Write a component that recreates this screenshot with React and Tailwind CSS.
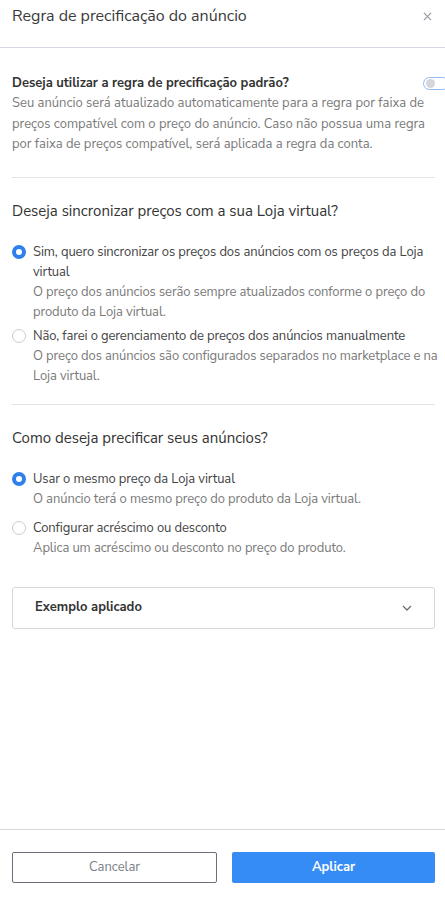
import React, { useState } from "react"

const Radio = ({ checked }) => (
  <span
    className={`mt-[3px] h-[14px] w-[14px] shrink-0 rounded-full bg-white ${
      checked ? "border-[4px] border-[#2f80ed]" : "border border-[#c9ccd3]"
    }`}
  />
)

const Option = ({ checked, label, desc, onClick }) => (
  <div className="flex cursor-pointer gap-[7px]" onClick={onClick}>
    <Radio checked={checked} />
    <div className="text-[13px] leading-[20px] tracking-[-0.1px]">
      <p className="text-[#444]">{label}</p>
      <p className="text-[#7a7a7a]">{desc}</p>
    </div>
  </div>
)

export default function App() {
  const [sync, setSync] = useState("sim")
  const [price, setPrice] = useState("mesmo")

  return (
    <div
      className="flex h-[897px] w-[445px] flex-col overflow-hidden bg-white"
      style={{ fontFamily: "'Nunito Sans', Lato, 'Open Sans', sans-serif" }}
    >
      {/* Header */}
      <div className="flex h-[48px] shrink-0 items-start justify-between border-b border-[#d6d7e6] pl-[12px] pr-[13px] pt-[5px]">
        <h1 className="text-[16px] leading-[22px] text-[#3a3a3a]">Regra de precificação do anúncio</h1>
        <button className="mt-[7px] text-[#9a9ca8]">
          <svg width="9" height="9" viewBox="0 0 10 10" fill="none" stroke="currentColor" strokeWidth="1.4">
            <path d="M1 1l8 8M9 1l-8 8" />
          </svg>
        </button>
      </div>

      <main className="flex-1 pl-[12px] pr-[10px]">
        {/* Default rule */}
        <div className="border-b border-[#e3e3e3] pb-[22px] pt-[25px]">
          <div className="flex items-center justify-between">
            <h2 className="text-[13px] font-bold leading-[20px] text-[#333]">Deseja utilizar a regra de precificação padrão?</h2>
            <span className="-mr-[14px] flex h-[13px] w-[26px] items-center rounded-full border border-[#8fbaf3] bg-white px-[2px]">
              <span className="h-[9px] w-[9px] rounded-full bg-[#d4d6dc]" />
            </span>
          </div>
          <p className="mt-0 text-[13px] leading-[20.5px] text-[#7a7a7a]">
            Seu anúncio será atualizado automaticamente para a regra por faixa de preços compatível com o preço do anúncio. Caso não possua uma regra por faixa de preços compatível, será aplicada a regra da conta.
          </p>
        </div>

        {/* Sync */}
        <div className="border-b border-[#e3e3e3] pb-[18px] pt-[22px]">
          <h2 className="text-[15px] leading-[22px] text-[#333]">Deseja sincronizar preços com a sua Loja virtual?</h2>
          <div className="-mr-[8px] mt-[20px] flex flex-col gap-[4px]">
            <Option
              checked={sync === "sim"}
              onClick={() => setSync("sim")}
              label="Sim, quero sincronizar os preços dos anúncios com os preços da Loja virtual"
              desc="O preço dos anúncios serão sempre atualizados conforme o preço do produto da Loja virtual."
            />
            <Option
              checked={sync === "nao"}
              onClick={() => setSync("nao")}
              label="Não, farei o gerenciamento de preços dos anúncios manualmente"
              desc="O preço dos anúncios são configurados separados no marketplace e na Loja virtual."
            />
          </div>
        </div>

        {/* Pricing */}
        <div className="pt-[22px]">
          <h2 className="text-[15px] leading-[22px] text-[#333]">Como deseja precificar seus anúncios?</h2>
          <div className="mt-[20px] flex flex-col gap-[9px]">
            <Option
              checked={price === "mesmo"}
              onClick={() => setPrice("mesmo")}
              label="Usar o mesmo preço da Loja virtual"
              desc="O anúncio terá o mesmo preço do produto da Loja virtual."
            />
            <Option
              checked={price === "config"}
              onClick={() => setPrice("config")}
              label="Configurar acréscimo ou desconto"
              desc="Aplica um acréscimo ou desconto no preço do produto."
            />
          </div>

          <button className="mt-[29px] flex h-[42px] w-full items-center justify-between rounded-[3px] border border-[#d5d7dc] px-[22px]">
            <span className="text-[13px] font-bold text-[#333]">Exemplo aplicado</span>
            <svg width="10" height="6" viewBox="0 0 10 6" fill="none" stroke="#6b6e78" strokeWidth="1.3">
              <path d="M1 1l4 4 4-4" />
            </svg>
          </button>
        </div>
      </main>

      {/* Footer */}
      <div className="flex h-[68px] shrink-0 items-start gap-[15px] border-t border-[#d9d9d9] pl-[12px] pr-[10px] pt-[22px]">
        <button className="h-[31px] flex-1 rounded-[2px] border border-[#6b6e7c] text-[13px] text-[#7b7e88]">Cancelar</button>
        <button className="h-[31px] flex-1 rounded-[2px] bg-[#358cf4] text-[13px] font-bold text-white">Aplicar</button>
      </div>
    </div>
  )
}
